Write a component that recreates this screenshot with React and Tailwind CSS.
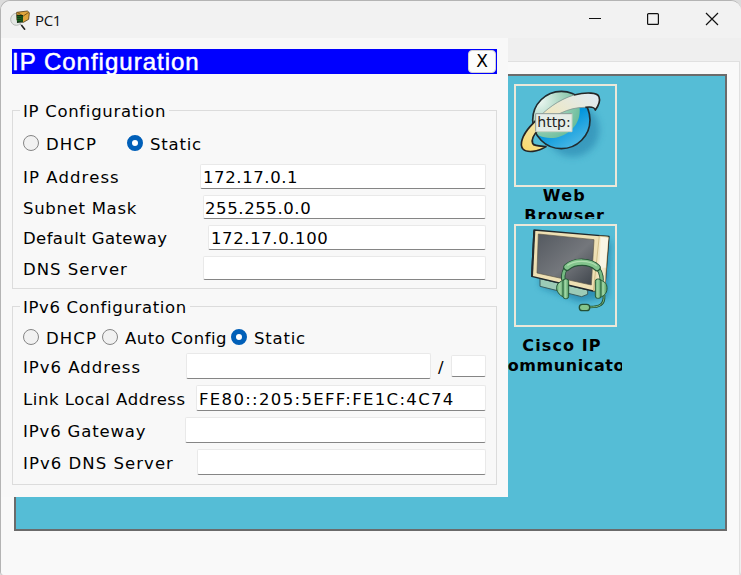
import React from "react";

const BODY = "font-['Verdana','DejaVu_Sans',sans-serif]";

function AppIcon() {
  return (
    <svg className="h-5 w-5 shrink-0" viewBox="30 27 60 60">
      <path d="M60 68L65 74" stroke="#999" strokeWidth="3" />
      <path d="M64 72L75 86" stroke="#222" strokeWidth="5" />
      <ellipse cx="49" cy="55" rx="17" ry="18" fill="#e4e7e4" stroke="#b5b8b5" strokeWidth="3" />
      <path d="M50 34L82 30L88 35L86 55L70 64L51 58Z" fill="#e0a63c" stroke="#59401a" strokeWidth="2.5" />
      <path d="M53 35L70 45L86 34" fill="none" stroke="#6a4a16" strokeWidth="2.5" />
      <path d="M50 41L69 42V64L51 66Z" fill="#102c12" />
      <path d="M54 45V63M60 45V63M66 46V62" stroke="#249326" strokeWidth="3" strokeDasharray="4 2" />
    </svg>
  );
}

function WebIcon() {
  return (
    <svg className="block h-full w-full" viewBox="48 33 297 297">
      <defs>
        <radialGradient id="globe" cx="0.2" cy="0.25" r="0.95">
          <stop offset="0" stopColor="#edf7f2" />
          <stop offset="0.5" stopColor="#a0d2bb" />
          <stop offset="1" stopColor="#5db894" />
        </radialGradient>
        <linearGradient id="sea" x1="0" y1="0" x2="0.6" y2="1">
          <stop offset="0" stopColor="#0e7fbd" />
          <stop offset="0.6" stopColor="#0094dc" />
          <stop offset="1" stopColor="#46b6e4" />
        </linearGradient>
        <linearGradient id="ring" x1="0" y1="1" x2="1" y2="0">
          <stop offset="0" stopColor="#fbda68" />
          <stop offset="0.45" stopColor="#f0e8bd" />
          <stop offset="1" stopColor="#dfeaf6" />
        </linearGradient>
        <filter id="soft" x="-30%" y="-30%" width="160%" height="160%">
          <feGaussianBlur stdDeviation="11" />
        </filter>
        <clipPath id="ball"><circle cx="184" cy="135" r="86" /></clipPath>
      </defs>
      <ellipse cx="218" cy="165" rx="80" ry="80" fill="#2583ad" opacity="0.6" filter="url(#soft)" />
      <circle cx="184" cy="135" r="86" fill="url(#sea)" />
      <path clipPath="url(#ball)" d="M90 40H218C248 88 246 136 214 164C184 191 147 196 114 181L90 150Z" fill="url(#globe)" />
      <circle cx="184" cy="135" r="86" fill="none" stroke="#202c30" strokeWidth="5" />
      <path d="M107 137C148 92 208 56 259 55C278 54 293 57 297 65C301 76 296 91 286 105C284 98 276 94 256 97C205 96 155 123 117 162C99 181 93 194 98 205C101 213 116 213 138 215C114 231 80 234 69 222C57 208 68 180 90 155Z" fill="url(#ring)" />
      <path d="M107 137C137 103 176 74 222 60M256 97C205 96 155 123 117 162" fill="none" stroke="#879894" strokeWidth="2.5" />
      <path d="M222 60C261 50 293 53 297 65C301 76 296 91 286 105C284 98 276 94 256 97M107 137L90 155C68 180 57 208 69 222C80 234 114 231 138 215C116 213 101 213 98 205C93 194 99 181 117 162" fill="none" stroke="#252525" strokeWidth="5" strokeLinejoin="round" />
      <path d="M107 116H216V170H107Z" fill="#e5ede7" />
      <path d="M107 170V116H216" fill="none" stroke="#8d9b98" strokeWidth="3" />
      <path d="M216 116V170H107" fill="none" stroke="#c7d2c2" strokeWidth="3" />
      <text className="font-normal tracking-normal" x="112" y="156" textLength="100" fontSize="42" fontFamily="DejaVu Sans, sans-serif" fill="#222">http:</text>
    </svg>
  );
}

function PhoneIcon() {
  return (
    <svg className="block h-full w-full" viewBox="48 33 297 297">
      <defs>
        <linearGradient id="screen" x1="0" y1="0" x2="1" y2="1">
          <stop offset="0" stopColor="#545960" />
          <stop offset="0.55" stopColor="#74777c" />
          <stop offset="1" stopColor="#3e444b" />
        </linearGradient>
        <linearGradient id="side" x1="0" y1="0" x2="1" y2="0">
          <stop offset="0" stopColor="#e8d6a2" />
          <stop offset="0.5" stopColor="#f6edd2" />
          <stop offset="1" stopColor="#eadfba" />
        </linearGradient>
        <linearGradient id="pad" x1="0" y1="0" x2="1" y2="0">
          <stop offset="0" stopColor="#65b277" />
          <stop offset="0.45" stopColor="#a0d5a4" />
          <stop offset="1" stopColor="#4b995e" />
        </linearGradient>
        <filter id="shade" x="-30%" y="-30%" width="160%" height="160%">
          <feGaussianBlur stdDeviation="9" />
        </filter>
      </defs>
      <path d="M125 90L333 80L325 245L240 262L120 215Z" fill="#17739f" opacity="0.6" filter="url(#shade)" />
      <path d="M120 191L263 225V238L245 245L120 214Z" fill="#9ccbb7" stroke="#395f61" strokeWidth="3" />
      <path d="M102 45L327 64L314 225L279 228L95 184Z" fill="#eee0b4" stroke="#20282b" strokeWidth="4" strokeLinejoin="round" />
      <path d="M298 63L325 66L314 225L280 228Z" fill="url(#side)" stroke="#c4ad72" strokeWidth="2" />
      <path d="M303 66L325 68L317 158H298Z" fill="#f9f5e5" />
      <path d="M115 57L282 74L274 210L111 174Z" fill="url(#screen)" stroke="#5c5748" strokeWidth="2" />
      <path d="M103 47L96 183" stroke="#242d30" strokeWidth="6" />
      <path d="M190 195C181 120 306 116 305 197" fill="none" stroke="#234e32" strokeWidth="13" />
      <path d="M190 195C181 120 306 116 305 197" fill="none" stroke="#75bb82" strokeWidth="8" />
      <path d="M201 157C223 137 270 137 291 158" fill="none" stroke="#275737" strokeWidth="22" strokeLinecap="round" />
      <path d="M201 156C223 136 270 136 291 157" fill="none" stroke="#83c58d" strokeWidth="16" strokeLinecap="round" />
      <path d="M202 151C225 135 267 135 290 152" fill="none" stroke="#b0deb0" strokeWidth="4" />
      <path d="M312 240C314 269 300 277 265 276" fill="none" stroke="#234e32" strokeWidth="8" />
      <path d="M312 240C314 269 300 277 265 276" fill="none" stroke="#74ba81" strokeWidth="3" />
      <rect x="238" y="268" width="31" height="19" rx="9" fill="#85c58b" stroke="#245034" strokeWidth="4" />
      <path d="M190 194L176 204C168 211 168 224 174 232C178 239 184 244 192 246Z" fill="url(#pad)" stroke="#285a39" strokeWidth="3" />
      <rect x="189" y="192" width="17" height="59" rx="7" fill="url(#pad)" stroke="#285a39" strokeWidth="3" />
      <path d="M300 193L314 202C323 209 323 226 317 235C313 241 307 245 300 247Z" fill="url(#pad)" stroke="#285a39" strokeWidth="3" />
      <rect x="286" y="192" width="17" height="58" rx="7" fill="url(#pad)" stroke="#285a39" strokeWidth="3" />
    </svg>
  );
}

function Radio({ checked }) {
  return checked ? (
    <span className="h-4 w-4 shrink-0 rounded-full border-[5px] border-[#005fb8] bg-white" />
  ) : (
    <span className="h-4 w-4 shrink-0 rounded-full border border-[#858585] bg-[#f1f1f1]" />
  );
}

function Field({ className, children }) {
  return (
    <div className={`h-full shrink-0 rounded-[2px] border border-[#e9e9e9] border-b-[#858585] bg-white pl-[2px] ${className}`}>
      {children}
    </div>
  );
}

function Row({ label, labelClass, className, children }) {
  return (
    <div className={`flex items-center justify-between pr-[10px] pl-[10px] ${className}`}>
      <span className={`whitespace-nowrap ${labelClass}`}>{label}</span>
      {children}
    </div>
  );
}

function Dialog() {
  return (
    <div className={`absolute top-[37px] left-0 h-[459px] w-[507px] bg-[#f8f8f8] px-[11px] pt-[11px] text-[16.5px] leading-5 tracking-[0.6px] text-black ${BODY}`}>
      <div className="flex h-[25px] items-center justify-between bg-[#0000ff] pr-px">
        <span className="pt-px font-['Liberation_Sans',sans-serif] text-[24px] leading-[24px] tracking-[1px] text-white [-webkit-text-stroke:0.5px_white]">IP Configuration</span>
        <button className="h-[23px] w-7 rounded-[4px] border border-[#d2d2d2] bg-[#fdfdfd] text-[17px] leading-[21px] tracking-normal">X</button>
      </div>

      <fieldset className="mt-[26px] h-[189px] border border-[#dcdcdc]">
        <legend className="ml-[7px] h-5 px-[3px] pt-[2px] tracking-[0.7px]">IP Configuration</legend>
        <div className="mt-[13px] flex h-5 items-center pl-[10px]">
          <Radio />
          <span className="ml-[7px] w-[81px] pt-[3px] tracking-[1.1px]">DHCP</span>
          <Radio checked />
          <span className="ml-[7px] pt-[3px] tracking-[0.8px]">Static</span>
        </div>
        <Row label="IP Address" labelClass="pt-[2px] tracking-[1.1px]" className="mt-[11px] h-[25px]"><Field className="w-[286px] pt-[3px]">172.17.0.1</Field></Row>
        <Row label="Subnet Mask" labelClass="pt-[3px] tracking-[0.7px]" className="mt-[6px] h-[24px]"><Field className="w-[283px] pt-[3px] pl-px">255.255.0.0</Field></Row>
        <Row label="Default Gateway" labelClass="pt-[2px] tracking-[0.4px]" className="mt-[6px] h-[25px]"><Field className="w-[278px] pt-[3px]">172.17.0.100</Field></Row>
        <Row label="DNS Server" labelClass="pt-[3px] tracking-[1px]" className="mt-[6px] h-[24px]"><Field className="w-[283px]" /></Row>
      </fieldset>

      <fieldset className="mt-[7px] h-[189px] border border-[#dcdcdc]">
        <legend className="ml-[7px] h-5 px-[3px] pt-[2px] tracking-[0.65px]">IPv6 Configuration</legend>
        <div className="mt-[11px] flex h-5 items-center pl-[10px]">
          <Radio />
          <span className="ml-[7px] w-[56px] pt-[3px] tracking-[1.1px]">DHCP</span>
          <Radio />
          <span className="ml-[7px] w-[106px] pt-[3px] tracking-[0.5px] whitespace-nowrap">Auto Config</span>
          <Radio checked />
          <span className="ml-[7px] pt-[3px] tracking-[0.8px]">Static</span>
        </div>
        <Row label="IPv6 Address" labelClass="pt-[3px] tracking-[1px]" className="mt-[6px] h-[26px]">
          <div className="flex h-full items-center">
            <Field className="w-[245px]" />
            <span className="w-5 pt-[3px] text-center">/</span>
            <div className="h-[22px]"><Field className="w-[35px]" /></div>
          </div>
        </Row>
        <Row label="Link Local Address" labelClass="pt-[3px] tracking-[0.55px]" className="mt-[6px] h-[26px]"><Field className="w-[290px] pt-[4px] tracking-[1.33px]">FE80::205:5EFF:FE1C:4C74</Field></Row>
        <Row label="IPv6 Gateway" labelClass="pt-[3px] tracking-[0.85px]" className="mt-[6px] h-[26px]"><Field className="w-[301px]" /></Row>
        <Row label="IPv6 DNS Server" labelClass="pt-[3px] tracking-[1.05px]" className="mt-[6px] h-[26px]"><Field className="w-[289px]" /></Row>
      </fieldset>
    </div>
  );
}

export default function App() {
  return (
    <div className="h-[575px] w-[741px] overflow-hidden bg-[#dcdcdc]">
      <div className="relative flex h-full flex-col overflow-hidden rounded-t-[10px] rounded-b-[4px] border-t border-l border-[#b4b4b4] bg-[#efefef]">
        <header className="flex h-[37px] shrink-0 items-center justify-between bg-[#f2f2f2] pl-[9px]">
          <div className="flex items-center">
            <AppIcon />
            <span className="ml-[5px] font-['Open_Sans',sans-serif] text-[15px] leading-5 tracking-[-0.3px] text-[#111]">PC1</span>
          </div>
          <svg className="mr-[21px] h-[15px] w-[132px]" viewBox="0 0 132 15" fill="none" stroke="#111" strokeWidth="1.2">
            <path d="M1 6.5H13" />
            <rect x="59.6" y="1.6" width="10.8" height="10.8" rx="1" />
            <path d="M118 1L130 13M130 1L118 13" />
          </svg>
        </header>
        <main className="mt-[23px] mr-px flex-1 border-t border-r border-[#e0e0e0] bg-[#f9f9f9] pt-[12px] pl-[13px]">
          <section className="flex h-[457px] w-[713px] justify-end border-2 border-[#6b6b6b] bg-[#55bdd6] pr-[103px]">
            <div className={`flex w-[115px] flex-col items-center overflow-hidden pt-[8px] text-center text-[16px] leading-5 font-bold text-black ${BODY}`}>
              <div className="ml-[2px] h-[103px] w-[103px] shrink-0 border-2 border-[#ebe8d9]"><WebIcon /></div>
              <div className="h-8 shrink-0 overflow-hidden">
                <div className="-mt-px tracking-[1.3px]">Web</div>
                <div className="tracking-[0.9px]">Browser</div>
              </div>
              <div className="mt-[5px] ml-[2px] h-[103px] w-[103px] shrink-0 border-2 border-[#ebe8d9]"><PhoneIcon /></div>
              <div className="mt-[9px] mr-[5px] tracking-[1.1px]">Cisco IP</div>
              <div className="tracking-[0.6px]">Communicator</div>
            </div>
          </section>
        </main>
        <Dialog />
      </div>
    </div>
  );
}
